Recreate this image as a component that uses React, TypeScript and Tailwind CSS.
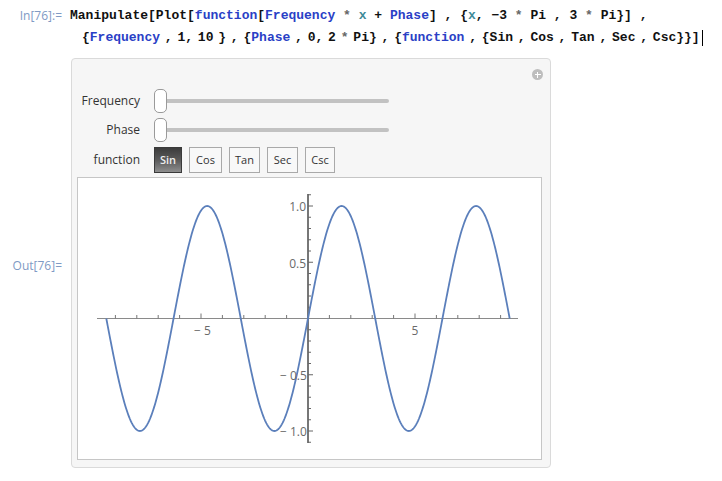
import type { ReactNode } from 'react';

const MONO = { fontFamily: '"Liberation Mono", "DejaVu Sans Mono", monospace' };
const SANS = { fontFamily: '"Open Sans", "Noto Sans", sans-serif' };

// page-space mapping for the plot (viewBox uses page pixels)
const X0 = 307;
const Y0 = 318.5;
const SX = 21.4;
const SY = 112.5;

function sinePath() {
  const pts: string[] = [];
  const n = 600;
  for (let i = 0; i <= n; i++) {
    const x = -3 * Math.PI + (6 * Math.PI * i) / n;
    const px = X0 + SX * x;
    const py = Y0 - SY * Math.sin(x);
    pts.push(`${i === 0 ? 'M' : 'L'}${px.toFixed(2)},${py.toFixed(2)}`);
  }
  return pts.join(' ');
}

function B({ children }: { children: ReactNode }) {
  return <span className="text-[#2a3fc6]">{children}</span>;
}

function T({ children }: { children: ReactNode }) {
  return <span className="text-[#3f8b99]">{children}</span>;
}

function Star() {
  return <span className="text-[#666]">*</span>;
}

function Slider({ label }: { label: string }) {
  return (
    <div className="flex h-[29px] items-center">
      <div className="w-[69px] pr-[1px] text-right text-[12px] text-[#333]">{label}</div>
      <div className="relative ml-[13px] flex h-[24px] w-[235px] items-center">
        <div className="ml-[6px] h-[4px] w-[229px] rounded-full bg-[#c2c2c2]" />
        <div className="absolute left-0 top-0 h-[24px] w-[13px] rounded-[5px] border border-[#9a9a9a] bg-white" />
      </div>
    </div>
  );
}

function FnButton({ label, width, active }: { label: string; width: string; active?: boolean }) {
  if (active) {
    return (
      <div
        className={`flex h-[26px] items-center justify-center border border-[#3a3a3a] bg-gradient-to-b from-[#3c3c3c] via-[#5a5a5a] to-[#8e8e8e] text-[11px] font-semibold text-[#eee] ${width}`}
      >
        {label}
      </div>
    );
  }
  return (
    <div
      className={`flex h-[26px] items-center justify-center border border-[#a9a9a9] bg-[#f8f8f8] text-[11px] text-[#333] ${width}`}
    >
      {label}
    </div>
  );
}

function Plot() {
  const xticks = [-9, -8, -7, -6, -5, -4, -3, -2, -1, 1, 2, 3, 4, 5, 6, 7, 8, 9];
  const yticks = [-1.1, -1, -0.9, -0.8, -0.7, -0.6, -0.5, -0.4, -0.3, -0.2, -0.1, 0.1, 0.2, 0.3, 0.4, 0.5, 0.6, 0.7, 0.8, 0.9, 1.0, 1.1];
  return (
    <svg width="463" height="281" viewBox="77 178 463 281" className="block">
      <line x1="96" y1={Y0} x2="517" y2={Y0} stroke="#8a8a8a" strokeWidth="1" />
      {xticks.map((t) => (
        <line
          key={t}
          x1={X0 + SX * t}
          y1={Y0}
          x2={X0 + SX * t}
          y2={Y0 - (t % 5 === 0 ? 5 : 3.5)}
          stroke="#777"
          strokeWidth="1"
        />
      ))}
      <line x1={X0} y1="194" x2={X0} y2="443" stroke="#555" strokeWidth="1.6" />
      {yticks.map((t) => {
        const major = Math.abs(Math.abs(t) - 0.5) < 0.01 || Math.abs(Math.abs(t) - 1) < 0.01;
        return (
          <line
            key={t}
            x1={X0}
            y1={Y0 - SY * t}
            x2={X0 + (major ? 5 : 3)}
            y2={Y0 - SY * t}
            stroke="#666"
            strokeWidth="1"
          />
        );
      })}
      <path d={sinePath()} fill="none" stroke="#5b7fbb" strokeWidth="1.8" strokeLinejoin="round" />
      <g fill="#6a6a6a" fontSize="12" style={SANS}>
        <text x="305" y="211" textAnchor="end">1.0</text>
        <text x="305" y="268" textAnchor="end">0.5</text>
        <text x="279" y="380">− 0.5</text>
        <text x="279" y="436">− 1.0</text>
        <text x="193" y="335">− 5</text>
        <text x="414" y="335" textAnchor="middle">5</text>
      </g>
    </svg>
  );
}

export default function App() {
  return (
    <div className="min-h-[481px] w-[722px] bg-white pt-[5px]">
      <div className="flex h-[22px] items-center">
        <div className="w-[62px] text-right text-[12px] text-[#7f9ac4]" style={SANS}>
          In[76]:=
        </div>
        <div className="ml-[8px] whitespace-pre text-[13px] font-bold text-[#111]" style={MONO}>
          Manipulate[Plot[<B>function</B>[<B>Frequency</B> <Star /> <T>x</T> + <B>Phase</B>] , {'{'}
          <T>x</T>, −3 <Star /> Pi , 3 <Star /> Pi{'}'}] ,
        </div>
      </div>
      <div className="flex h-[22px] items-center">
        <div
          className="ml-[82px] whitespace-pre text-[13px] font-bold text-[#111] [word-spacing:-3px]"
          style={MONO}
        >
          {'{'}
          <B>Frequency</B> , 1, 10 {'}'} , {'{'}
          <B>Phase</B> , 0, 2 <Star /> Pi{'}'} , {'{'}
          <B>function</B> , {'{'}Sin , Cos , Tan , Sec , Csc{'}}'}]
        </div>
        <div className="ml-[2px] h-[16px] w-[1.5px] bg-black" />
      </div>
      <div className="mt-[9px] flex">
        <div className="w-[62px] pt-[200px] text-right text-[12px] leading-[16px] text-[#7f9ac4]" style={SANS}>
          Out[76]=
        </div>
        <div
          className="relative ml-[9px] h-[410px] w-[480px] rounded-[4px] border border-[#dadada] bg-[#f6f6f6]"
          style={SANS}
        >
          <div className="absolute right-[7px] top-[10px] flex h-[11px] w-[11px] items-center justify-center rounded-full bg-[#bdbdbd]">
            <div className="absolute h-[1.5px] w-[6px] bg-white" />
            <div className="absolute h-[6px] w-[1.5px] bg-white" />
          </div>
          <div className="pt-[27px]">
            <Slider label="Frequency" />
            <Slider label="Phase" />
            <div className="mt-[3px] flex h-[26px] items-center">
              <div className="w-[69px] pr-[1px] text-right text-[12px] text-[#333]">function</div>
              <div className="ml-[13px] flex gap-[7px]">
                <FnButton label="Sin" width="w-[28px]" active />
                <FnButton label="Cos" width="w-[33px]" />
                <FnButton label="Tan" width="w-[31px]" />
                <FnButton label="Sec" width="w-[31px]" />
                <FnButton label="Csc" width="w-[30px]" />
              </div>
            </div>
          </div>
          <div className="ml-[5px] mt-[4px] w-[465px] border border-[#c6c6c6] bg-white">
            <Plot />
          </div>
        </div>
      </div>
    </div>
  );
}
